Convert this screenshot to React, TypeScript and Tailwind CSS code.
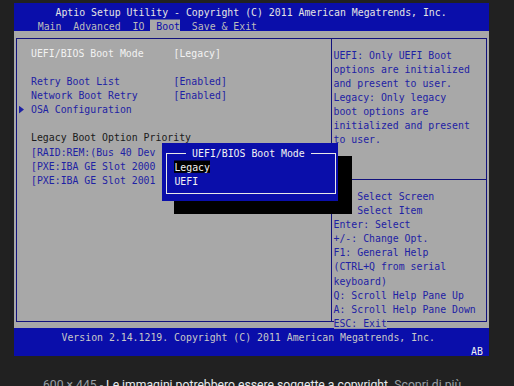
import React from "react";

// 80x25 text-mode screen: one cell = 5.9375 x 14.12 px
const row = "h-[14.12px] leading-[17px] whitespace-pre [transform:scaleY(1.12)]";

const LEFT_ROWS: { text?: string; value?: string; tone: "sel" | "blue" | "dark"; arrow?: boolean }[] = [
  { text: "UEFI/BIOS Boot Mode", value: "[Legacy]", tone: "sel" },
  { tone: "dark" },
  { text: "Retry Boot List", value: "[Enabled]", tone: "blue" },
  { text: "Network Boot Retry", value: "[Enabled]", tone: "blue" },
  { text: "OSA Configuration", tone: "blue", arrow: true },
  { tone: "dark" },
  { text: "Legacy Boot Option Priority", tone: "dark" },
  { text: "[RAID:REM:(Bus 40 Dev 00)PCI RAID Adapter]", tone: "blue" },
  { text: "[PXE:IBA GE Slot 2000 v1338]", tone: "blue" },
  { text: "[PXE:IBA GE Slot 2001 v1338]", tone: "blue" },
];

const HELP = [
  "UEFI: Only UEFI Boot",
  "options are initialized",
  "and present to user.",
  "Legacy: Only legacy",
  "boot options are",
  "initialized and present",
  "to user.",
];

const KEYS = [
  "\u2192\u2190: Select Screen",
  "\u2191\u2193: Select Item",
  "Enter: Select",
  "+/-: Change Opt.",
  "F1: General Help",
  "(CTRL+Q from serial",
  "keyboard)",
  "Q: Scroll Help Pane Up",
  "A: Scroll Help Pane Down",
];

const toneClass = {
  sel: "text-[#f2f2f2]",
  blue: "text-[#1e22a4]",
  dark: "text-[#1a1a1a]",
};

export default function App() {
  return (
    <div className="h-[386px] w-[514px] overflow-hidden bg-[#212121]">
      <div className="relative ml-[14px] mt-[3px] h-[353px] w-[475px] font-['DejaVu_Sans_Mono',monospace] text-[9.86px]">
        {/* title + tabs */}
        <div className="h-[28.24px] bg-[#0a0eaa]">
          <div className={`${row} pl-[41.5px] text-[#e4e4e4]`}>
            Aptio Setup Utility - Copyright (C) 2011 American Megatrends, Inc.
          </div>
          <div className={`${row} pl-[23.75px] text-[#bcbcbc]`}>
            {"Main  Advanced  IO "}
            <span className="bg-[#a8a8a8] text-[#0a0eaa]">{" Boot"}</span>
            {"  Save & Exit"}
          </div>
        </div>

        {/* body */}
        <div className="h-[296.52px] bg-[#a8a8a8] pt-[6.6px]">
          <div className="mx-[2px] flex h-[284px] border border-[#12127c]">
            <div className="w-[314px] overflow-hidden pt-[7px]">
              {LEFT_ROWS.map((r, i) => (
                <div key={i} className={`${row} flex items-center ${toneClass[r.tone]}`}>
                  {r.arrow ? (
                    <svg width="5" height="7" viewBox="0 0 5 7" className="ml-[1.5px] mr-[7.5px] shrink-0">
                      <path d="M0 0 L5 3.5 L0 7 Z" fill="#1e22a4" />
                    </svg>
                  ) : (
                    <span className="w-[14px] shrink-0" />
                  )}
                  {r.text && <span className="w-[142.5px] shrink-0">{r.text}</span>}
                  {r.value && <span>{r.value}</span>}
                </div>
              ))}
            </div>
            <div className="flex-1 border-l border-[#12127c] pt-[7px] text-[#1e22a4]">
              {HELP.map((t) => (
                <div key={t} className={`${row} pl-[1.5px]`}>
                  {t}
                </div>
              ))}
              <div className="h-[28.24px]" />
              <div className="flex h-[14.12px] items-center">
                <div className="h-px w-full bg-[#12127c]" />
              </div>
              {KEYS.map((t) => (
                <div key={t} className={`${row} pl-[1.5px]`}>
                  {t}
                </div>
              ))}
              <div className={`${row} pl-[1.5px]`}>
                <span className="bg-[#a8a8a8]">ESC: Exit</span>
              </div>
            </div>
          </div>
        </div>

        {/* footer */}
        <div className="h-[28.24px] bg-[#0a0eaa]">
          <div className={`${row} pl-[47.5px] text-[#c8c8c8]`}>
            Version 2.14.1219. Copyright (C) 2011 American Megatrends, Inc.
          </div>
          <div className={`${row} pl-[457px] text-[#f0f0f0]`}>AB</div>
        </div>

        {/* popup shadow */}
        <div className="absolute left-[160px] top-[153px] h-[58px] w-[178px] bg-black" />
        {/* popup */}
        <div className="absolute left-[148px] top-[140px] h-[58px] w-[176px] bg-[#0a0eaa] pt-[1px] text-[#f2f2f2]">
          <div className="absolute bottom-[7.5px] left-[4px] right-[2px] top-[9.5px] border border-[#e8e8e8]" />
          <div className={`${row} relative pl-[24.2px]`}>
            <span className="bg-[#0a0eaa]">{" UEFI/BIOS Boot Mode "}</span>
          </div>
          <div className={`${row} relative pl-[12.4px]`}>
            <span className="bg-black">Legacy</span>
          </div>
          <div className={`${row} relative pl-[12.4px]`}>UEFI</div>
        </div>
      </div>

      <div className="mt-[21px] whitespace-nowrap pl-[43px] font-['Roboto',sans-serif] text-[12.2px] leading-[16px] text-[#9aa0a6]">
        600 × 445 - <span className="text-[#e8eaed]">Le immagini potrebbero essere soggette a copyright.</span> Scopri di più
      </div>
    </div>
  );
}
